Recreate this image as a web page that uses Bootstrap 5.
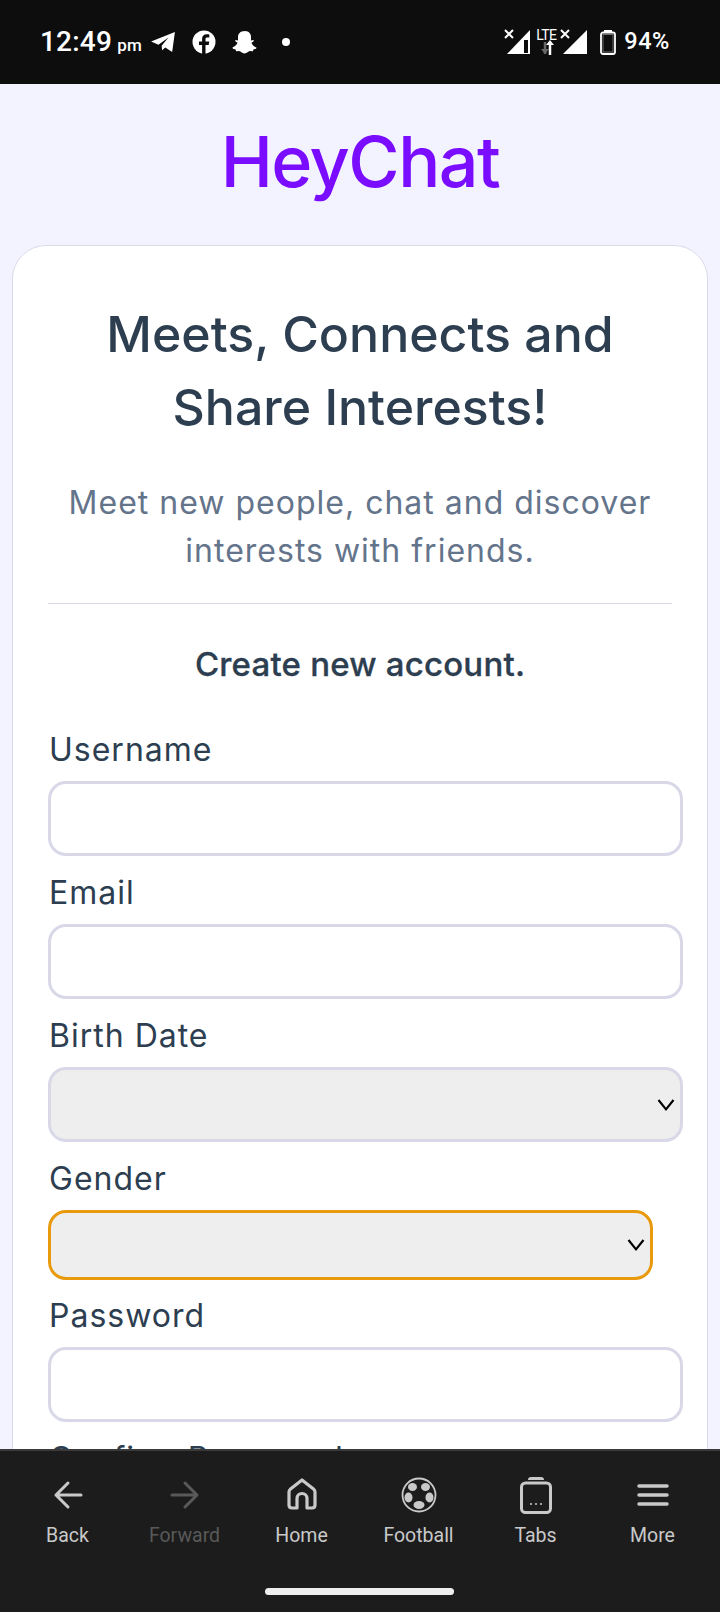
<!DOCTYPE html>
<html lang="en">
<head>
<meta charset="UTF-8">
<title>HeyChat</title>
<link href="https://cdn.jsdelivr.net/npm/bootstrap@5.3.0/dist/css/bootstrap.min.css" rel="stylesheet">
<style>
html, body { height: 1612px; overflow: hidden; }
body { font-family: Inter, "Noto Sans", sans-serif; background: #f3f3ff; }
.status-top { height: 84px; background: #0d0d0e; color: #fff; font-family: Roboto, sans-serif; padding: 0 50px 0 40px; }
.clock { font-size: 28px; font-weight: 500; letter-spacing: .2px; }
.clock small { font-size: 17px; margin-left: -2px; }
.notif-dot { width: 8px; height: 8px; }
.batt-text { font-size: 23.5px; font-weight: 500; letter-spacing: .6px; }
.net-label { width: 32px; height: 28px; font-size: 14px; line-height: 14px; padding-left: 3px; margin-left: 2px; letter-spacing: -.6px; }
.net-arrows { left: 3px; top: 11px; }
.signal-two { margin-left: -5px; }
.batt-icon { margin-left: 13px; }
.page-area { height: 1365px; overflow: hidden; }
.brand-name { color: #7a0cff; font-size: 70px; font-weight: 500; letter-spacing: -1.5px; line-height: 1; height: 161px; padding-top: 43px; margin: 0; }
.form-panel { margin: 0 12px; background: #fff; border: 1px solid #dadaea; border-radius: 34px; padding: 52px 35px 0; height: 1300px; color: #2c3e50; }
.panel-title { font-size: 50px; font-weight: 500; line-height: 73px; margin: 0; }
.panel-sub { color: #64748b; font-size: 32px; line-height: 48px; margin: 35px 0 0; letter-spacing: 1px; }
.panel-rule { border-top: 1px solid #d8d8e2; opacity: 1; margin: 28px 0 0; }
.panel-create { font-size: 33px; font-weight: 500; line-height: 40px; margin: 40px 0 0; letter-spacing: .2px; -webkit-text-stroke: .3px #2c3e50; }
.field-wrap { margin-top: 17px; }
.field-wrap.first { margin-top: 46px; }
.field-wrap.tight { margin-top: 16px; }
.field-label { font-size: 32px; line-height: 40px; margin: 0 0 11px 1px; display: block; letter-spacing: 1px; }
.field-box { display: block; width: 635px; height: 75px; border: 3px solid #d8d8e8; border-radius: 18px; background-color: #fff; padding: 0; box-shadow: none; }
.field-box.drop { background: #eee url("data:image/svg+xml,%3Csvg xmlns='http://www.w3.org/2000/svg' viewBox='0 0 16 16'%3E%3Cpath fill='none' stroke='%23000' stroke-width='1.700' d='M2 4l6 7.500 6-7.500'/%3E%3C/svg%3E") no-repeat right 4px center / 20px 20px; appearance: none; }
.field-box.picked { width: 605px; height: 70px; border-color: #e89a0c; }
.app-bar { height: 163px; background: #1c1c1c; border-top: 2px solid #3a3a3a; position: relative; color: #c9c9c9; font-family: Roboto, sans-serif; }
.bar-item { width: 117px; font-size: 19.5px; line-height: 24px; padding-top: 29px; }
.bar-item svg { display: block; margin: 0 auto 14px; }
.bar-item.off { color: #595959; }
.bar-item svg.tall { margin-top: -3px; margin-bottom: 11px; }
.bar-item svg.taller { margin-top: -4px; margin-bottom: 10px; }
.bar-item svg.house { margin-top: -2px; margin-bottom: 14px; }
.home-line { position: absolute; left: 265px; bottom: 17px; width: 189px; height: 7px; background: #eee; border-radius: 4px; }
</style>
</head>
<body>

<!-- phone status bar -->
<div class="status-top d-flex align-items-center justify-content-between">
  <div class="d-flex align-items-center">
    <span class="clock">12:49 <small>pm</small></span>
    <svg class="ms-2" width="26" height="22" viewBox="0 0 28 24" fill="#fff"><path d="M1 11.500 27 1 24 23 16.500 18 13 21 12.500 16 20 7 9 15z"/></svg>
    <svg class="ms-3" width="24" height="24" viewBox="0 0 24 24"><circle cx="12" cy="12" r="11.500" fill="#fff"/><path fill="#0d0d0e" d="M13.500 24v-9h3.200l.5-3.600h-3.700V9.300c0-1 .4-1.700 1.800-1.700h2V4.400c-.5-.1-1.500-.2-2.700-.2-2.700 0-4.500 1.600-4.500 4.600v2.600H7v3.600h3.100v9z"/></svg>
    <svg class="ms-3" width="26" height="25" viewBox="0 0 26 25" fill="#fff"><path d="M13 1c4 0 6 3 6 6v3.500l2.300-.6.700 1.200-2.500 1.700c.8 2.200 2.500 3.700 5 4.700l-.4 1.300-2.700.7-.5 1.800-3-.2c-1.800.4-2.700 2.300-5.400 2.300s-3.600-1.900-5.400-2.300l-3 .2-.5-1.800-2.700-.7L.5 17.500c2.500-1 4.200-2.500 5-4.700L3 11.100l.7-1.200 2.300.6V7c0-3 2-6 7-6z"/></svg>
    <span class="notif-dot ms-4 rounded-circle bg-white d-block"></span>
  </div>
  <div class="d-flex align-items-center">
    <svg width="27" height="26" viewBox="0 0 27 26" fill="#fff"><path d="M26 1v24H3z"/><path d="M1 1l8 8M9 1L1 9" stroke="#fff" stroke-width="2"/><path d="M20 11h4v13h-4z" fill="#0d0d0e"/></svg>
    <span class="net-label position-relative">LTE<svg class="net-arrows position-absolute" width="20" height="16" viewBox="0 0 20 16"><path d="M9 3v12" stroke="#666" stroke-width="2.500"/><path d="M5 10l4 5 4-5z" fill="#666"/><path d="M14 5v11" stroke="#fff" stroke-width="2.500"/><path d="M10 6l4-5 4 5z" fill="#fff"/></svg></span>
    <svg class="signal-two" width="27" height="26" viewBox="0 0 27 26" fill="#fff"><path d="M27 1v24H3z"/><path d="M1 1l8 8M9 1L1 9" stroke="#fff" stroke-width="2"/></svg>
    <svg class="batt-icon" width="16" height="26" viewBox="0 0 16 26"><path d="M4 1h8v2H4z" fill="#fff"/><rect x="1" y="3.500" width="14" height="21.500" rx="2" fill="none" stroke="#fff" stroke-width="1.800"/><rect x="3" y="5.500" width="10" height="17.500" fill="none" stroke="#888" stroke-width=".8"/></svg>
    <span class="batt-text ms-2">94%</span>
  </div>
</div>

<div class="page-area">
  <h1 class="brand-name text-center">HeyChat</h1>

  <div class="form-panel">
    <h2 class="panel-title text-center">Meets, Connects and<br>Share Interests!</h2>
    <p class="panel-sub text-center">Meet new people, chat and discover<br>interests with friends.</p>
    <hr class="panel-rule">
    <p class="panel-create text-center">Create new account.</p>

    <form>
      <div class="field-wrap first">
        <label class="field-label">Username</label>
        <input class="field-box form-control" type="text">
      </div>
      <div class="field-wrap">
        <label class="field-label">Email</label>
        <input class="field-box form-control" type="email">
      </div>
      <div class="field-wrap">
        <label class="field-label">Birth Date</label>
        <select class="field-box drop"></select>
      </div>
      <div class="field-wrap">
        <label class="field-label">Gender</label>
        <select class="field-box drop picked"></select>
      </div>
      <div class="field-wrap tight">
        <label class="field-label">Password</label>
        <input class="field-box form-control" type="password">
      </div>
      <div class="field-wrap">
        <label class="field-label">Confirm Password</label>
        <input class="field-box form-control" type="password">
      </div>
    </form>
  </div>
</div>

<!-- browser bottom bar -->
<nav class="app-bar d-flex justify-content-center align-items-start text-center">
  <div class="bar-item">
    <svg width="30" height="30" viewBox="0 0 30 30" fill="none" stroke="currentColor" stroke-width="3" stroke-linecap="round" stroke-linejoin="round"><path d="M28 15H3M15 3 3 15l12 12"/></svg>
    Back
  </div>
  <div class="bar-item off">
    <svg width="30" height="30" viewBox="0 0 30 30" fill="none" stroke="currentColor" stroke-width="3" stroke-linecap="round" stroke-linejoin="round"><path d="M2 15h25M15 3l12 12-12 12"/></svg>
    Forward
  </div>
  <div class="bar-item">
    <svg class="house" width="30" height="32" viewBox="0 0 30 32" fill="none" stroke="currentColor" stroke-width="3.200" stroke-linejoin="round"><path d="M15 2 3.500 11c-1 .8-1.500 1.500-1.500 3v13c0 2 1 3 3 3h5V20.500a5 5 0 0 1 10 0V30h5c2 0 3-1 3-3V14c0-1.500-.5-2.200-1.500-3z"/></svg>
    Home
  </div>
  <div class="bar-item">
    <svg class="tall" width="36" height="36" viewBox="0 0 36 36" fill="currentColor"><circle cx="18" cy="18" r="16.500" fill="none" stroke="currentColor" stroke-width="1.800"/><ellipse cx="11.500" cy="10" rx="4.500" ry="4"/><ellipse cx="24.500" cy="10" rx="4.500" ry="4"/><ellipse cx="7.500" cy="20.500" rx="4" ry="5"/><ellipse cx="28.500" cy="20.500" rx="4" ry="5"/><ellipse cx="18" cy="28" rx="5.500" ry="4"/></svg>
    Football
  </div>
  <div class="bar-item">
    <svg class="taller" width="32" height="38" viewBox="0 0 32 38"><path d="M8 4c0-2 1-3 3-3h10c2 0 3 1 3 3z" fill="currentColor"/><rect x="1.500" y="7" width="29" height="29.500" rx="4" fill="none" stroke="currentColor" stroke-width="3"/><path d="M10 28h2M15 28h2M20 28h2" stroke="currentColor" stroke-width="1.500"/></svg>
    Tabs
  </div>
  <div class="bar-item">
    <svg width="32" height="30" viewBox="0 0 32 30" stroke="currentColor" stroke-width="3.500" stroke-linecap="round"><path d="M2 6h28M2 15h28M2 24h28"/></svg>
    More
  </div>
  <div class="home-line"></div>
</nav>

<script src="https://cdn.jsdelivr.net/npm/bootstrap@5.3.0/dist/js/bootstrap.bundle.min.js"></script>
</body>
</html>
